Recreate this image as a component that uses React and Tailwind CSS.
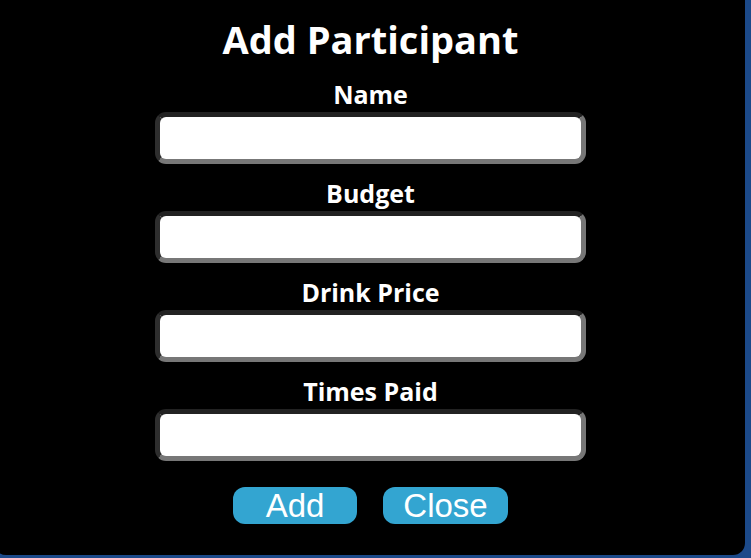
import React from "react";

function Field({ label }) {
  return (
    <div className="flex flex-col items-center">
      <div className="text-[25px] leading-[30px] font-bold text-white">
        {label}
      </div>
      <input
        type="text"
        className="mt-[3px] h-[52px] w-[431px] rounded-[11px] border-[5px] border-t-[#222222] border-l-[#2e2e2e] border-b-[#777777] border-r-[#777777] bg-white outline-none"
      />
    </div>
  );
}

export default function App() {
  return (
    <div className="w-[751px] h-[558px] overflow-hidden bg-[#1c4a8a] font-['Open_Sans',sans-serif]">
      <div className="-ml-[6px] w-[751px] h-[555px] bg-black rounded-b-[12px] pl-[2px] pt-[14px] flex flex-col items-center">
        <h1 className="text-[38px] leading-[50px] font-bold text-white">Add Participant</h1>
        <div className="mt-[15px] flex flex-col gap-[14px]">
          <Field label="Name" />
          <Field label="Budget" />
          <Field label="Drink Price" />
          <Field label="Times Paid" />
        </div>
        <div className="mt-[26px] flex gap-[26px] font-['Liberation_Sans',Arial,sans-serif]">
          <button className="w-[124px] h-[37px] rounded-[12px] bg-[#33a5d1] text-white text-[33px] leading-[37px]">
            Add
          </button>
          <button className="w-[125px] h-[37px] rounded-[12px] bg-[#33a5d1] text-white text-[33px] leading-[37px]">
            Close
          </button>
        </div>
      </div>
    </div>
  );
}
